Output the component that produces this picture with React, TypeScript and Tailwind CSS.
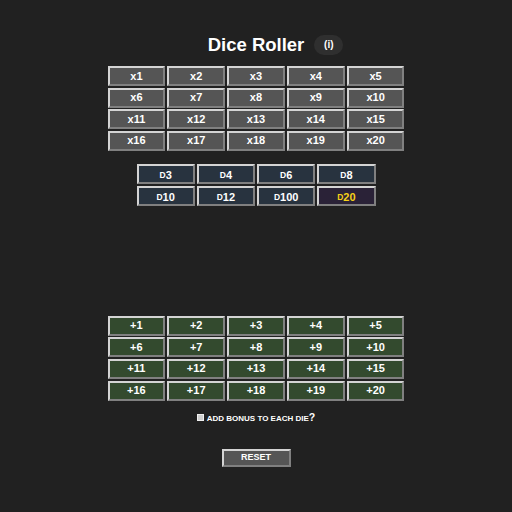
import { useState } from 'react';

const MULTIPLIERS = Array.from({ length: 20 }, (_, i) => i + 1);
const DICE = [3, 4, 6, 8, 10, 12, 100, 20];

const btnBase =
  'h-[20px] border-2 [border-style:outset] border-[#d4d4d4] text-[11px] font-bold leading-none flex items-center justify-center';

const App = () => {
  const [count, setCount] = useState(1);
  const [die, setDie] = useState(20);
  const [bonus, setBonus] = useState(0);
  const [eachDie, setEachDie] = useState(false);

  return (
    <div
      className="min-h-screen bg-[#212121] flex flex-col items-center pt-[35px]"
      style={{ fontFamily: '"Liberation Sans", Arial, sans-serif' }}
    >
      {/* Header */}
      <div className="w-full grid grid-cols-[1fr_auto_1fr] items-center h-[20px]">
        <div />
        <h1 className="text-[18.5px] font-bold text-white leading-none">Dice Roller</h1>
        <div className="flex">
          <button className="ml-[10px] h-[20px] w-[29px] rounded-full bg-[#2f2f2f] text-white text-[10px] font-bold leading-none">
            (i)
          </button>
        </div>
      </div>

      {/* Multipliers */}
      <div className="mt-[11px] w-[297px] grid grid-cols-5 gap-x-[2px] gap-y-[1.67px]">
        {MULTIPLIERS.map((n) => (
          <button
            key={n}
            onClick={() => setCount(n)}
            className={`${btnBase} bg-[#555555] text-white`}
          >
            x{n}
          </button>
        ))}
      </div>

      {/* Dice */}
      <div className="mt-[13px] w-[239px] grid grid-cols-4 gap-x-[2px] gap-y-[1.67px]">
        {DICE.map((d) => (
          <button
            key={d}
            onClick={() => setDie(d)}
            className={`${btnBase} items-baseline pt-[3px] ${
              die === d ? 'bg-[#2a2237] text-[#f7d117]' : 'bg-[#28333f] text-white'
            }`}
          >
            <span className="text-[8.5px]">D</span>
            <span>{d}</span>
          </button>
        ))}
      </div>

      {/* Bonus */}
      <div className="mt-[110px] w-[297px] grid grid-cols-5 gap-x-[2px] gap-y-[1.67px]">
        {MULTIPLIERS.map((n) => (
          <button
            key={n}
            onClick={() => setBonus(n)}
            className={`${btnBase} bg-[#334a2e] text-white`}
          >
            +{n}
          </button>
        ))}
      </div>

      <label className="mt-[11px] h-[12px] flex items-center gap-[3px] text-white font-bold leading-none">
        <input
          type="checkbox"
          checked={eachDie}
          onChange={() => setEachDie(!eachDie)}
          className="appearance-none w-[7px] h-[7px] bg-[#cfcfcf] border border-[#f0f0f0]"
        />
        <span className="flex items-baseline">
          <span className="text-[8px]">ADD BONUS TO EACH DIE</span>
          <span className="text-[10.5px]">?</span>
        </span>
      </label>

      <button
        onClick={() => {
          setCount(1);
          setBonus(0);
          setEachDie(false);
        }}
        className="mt-[25px] h-[18px] w-[69px] border-2 [border-style:outset] border-[#d4d4d4] bg-[#555555] text-white text-[9px] font-bold leading-none"
      >
        RESET
      </button>
      <span className="hidden">{count}{bonus}</span>
    </div>
  );
};

export default App;
